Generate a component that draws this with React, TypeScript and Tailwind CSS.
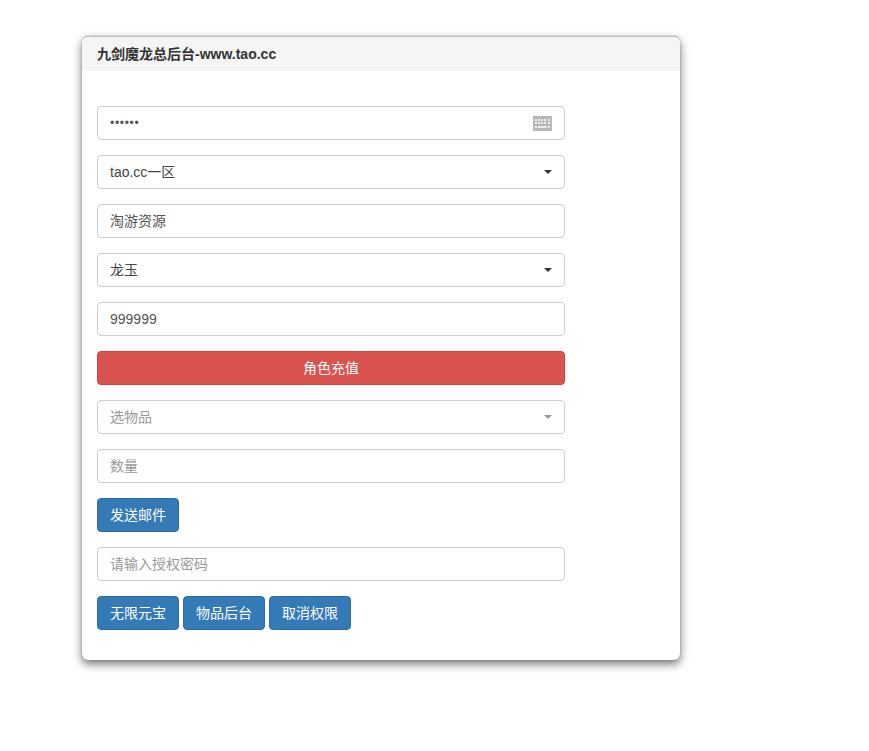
const fieldFont = "[font-family:'Liberation_Sans','Noto_Sans_CJK_SC',sans-serif]";

const Caret: React.FC<{ muted?: boolean }> = ({ muted }) => (
  <span
    className={`absolute right-[12px] top-[14px] h-0 w-0 border-x-[4px] border-t-[4px] border-x-transparent ${
      muted ? 'border-t-[#999999]' : 'border-t-[#333333]'
    }`}
  />
);

const Field: React.FC<{ value?: string; placeholder?: string }> = ({ value, placeholder }) => (
  <div
    className={`flex h-[34px] items-center rounded-[4px] border border-[#cccccc] bg-white px-3 text-[14px] ${
      value ? 'text-[#555555]' : 'text-[#999999]'
    }`}
  >
    {value || placeholder}
  </div>
);

const Select: React.FC<{ value: string; muted?: boolean }> = ({ value, muted }) => (
  <div
    className={`relative flex h-[34px] items-center rounded-[4px] border border-[#cccccc] bg-white px-3 text-[14px] ${
      muted ? 'text-[#999999]' : 'text-[#444444]'
    }`}
  >
    {value}
    <Caret muted={muted} />
  </div>
);

const BlueButton: React.FC<{ label: string }> = ({ label }) => (
  <button className="h-[34px] rounded-[4px] border border-[#2e6da4] bg-[#337ab7] px-3 text-[14px] text-white">
    {label}
  </button>
);

const Keyboard = () => (
  <svg width="19" height="15" viewBox="0 0 19 15" className="absolute right-[12px] top-[9px]">
    <rect width="19" height="15" fill="#b8b8b8" />
    <g fill="#eeeeee">
      <rect x="2" y="3" width="2" height="2" />
      <rect x="5" y="3" width="2" height="2" />
      <rect x="8" y="3" width="2" height="2" />
      <rect x="11" y="3" width="2" height="2" />
      <rect x="15" y="3" width="2" height="2" />
      <rect x="2" y="6" width="2" height="2" />
      <rect x="5" y="6" width="2" height="2" />
      <rect x="8" y="6" width="2" height="2" />
      <rect x="11" y="6" width="2" height="2" />
      <rect x="15" y="6" width="2" height="2" />
      <rect x="2" y="10" width="2" height="2" />
      <rect x="5" y="10" width="9" height="2" />
      <rect x="15" y="10" width="2" height="2" />
    </g>
  </svg>
);

const App: React.FC = () => {
  return (
    <div className={`min-h-[751px] bg-white pl-[82px] pt-[36px] ${fieldFont}`}>
      <div className="w-[598px] overflow-hidden rounded-[6px] border-t border-[#bdbdbd] bg-white shadow-[0_0_1px_rgba(0,0,0,0.55),0_4px_10px_rgba(0,0,0,0.55)]">
        <div className="flex h-[34px] items-center bg-[#f5f5f5] px-[15px] text-[14px] font-bold text-[#333333]">
          九剑魔龙总后台-www.tao.cc
        </div>
        <div className="px-[15px] pb-[30px] pt-[35px]">
          <div className="flex w-[468px] flex-col gap-[15px]">
            <div className="relative flex h-[34px] items-center rounded-[4px] border border-[#cccccc] bg-white px-3 text-[12px] tracking-[0.7px] text-[#555555]">
              ••••••
              <Keyboard />
            </div>
            <Select value="tao.cc一区" />
            <Field value="淘游资源" />
            <Select value="龙玉" />
            <Field value="999999" />
            <button className="h-[34px] rounded-[4px] border border-[#d43f3a] bg-[#d9534f] text-[14px] text-white">
              角色充值
            </button>
            <Select value="选物品" muted />
            <Field placeholder="数量" />
            <div className="flex">
              <BlueButton label="发送邮件" />
            </div>
            <Field placeholder="请输入授权密码" />
            <div className="flex gap-[4px]">
              <BlueButton label="无限元宝" />
              <BlueButton label="物品后台" />
              <BlueButton label="取消权限" />
            </div>
          </div>
        </div>
      </div>
    </div>
  );
};

export default App;
